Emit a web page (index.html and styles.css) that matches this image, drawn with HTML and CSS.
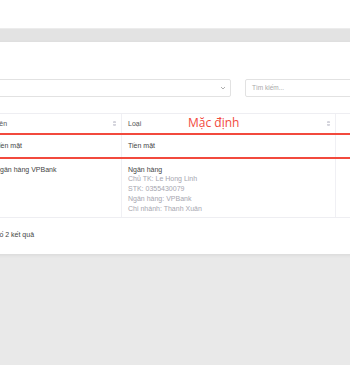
FILE: index.html
```html
<!DOCTYPE html>
<html lang="vi">
<head>
    <meta charset="UTF-8">
    <meta name="viewport" content="width=device-width, initial-scale=1.0">
    <title>Tài khoản thanh toán</title>
    <link rel="stylesheet" href="styles.css">
</head>
<body>
    <div class="topbar"></div>
    <div class="band"></div>
    <div class="page">
        <div class="card">
            <div class="filters">
                <div class="select">
                    <svg class="chevron" width="6" height="4" viewBox="0 0 6 4"><path d="M1 1 L3 3 L5 1" fill="none" stroke="#999" stroke-width="0.8"/></svg>
                </div>
                <div class="search">Tìm kiếm...</div>
            </div>
            <div class="table">
                <div class="row head">
                    <div class="cell c1">Tên <span class="sort"></span></div>
                    <div class="cell c2">Loại <span class="sort"></span></div>
                    <div class="cell c3"></div>
                </div>
                <div class="row marked">
                    <div class="cell c1">Tiền mặt</div>
                    <div class="cell c2">Tiền mặt</div>
                    <div class="cell c3"></div>
                </div>
                <div class="row">
                    <div class="cell c1">Ngân hàng VPBank</div>
                    <div class="cell c2">
                        <div>Ngân hàng</div>
                        <div class="muted">Chủ TK: Le Hong Linh</div>
                        <div class="muted">STK: 0355430079</div>
                        <div class="muted">Ngân hàng: VPBank</div>
                        <div class="muted">Chi nhánh: Thanh Xuân</div>
                    </div>
                    <div class="cell c3"></div>
                </div>
            </div>
            <div class="footer">Tổng số 2 kết quả</div>
            <div class="note">Mặc định</div>
        </div>
    </div>
</body>
</html>
```
FILE: styles.css
```css
html, body {
    margin: 0;
    padding: 0;
    height: 100%;
    overflow: hidden;
}
body {
    font-family: "Liberation Sans", Arial, sans-serif;
    font-size: 7px;
    color: #444;
    background: #e9e9e9;
}
.topbar {
    height: 28px;
    background: #fff;
}
.band {
    height: 14px;
    background: #e3e3e3;
    border-top: 1px solid #ececec;
    box-sizing: border-box;
}
.page {
    background: #e9e9e9;
}
.card {
    position: relative;
    background: #fff;
    margin-left: -11px;
    width: 400px;
    padding-top: 37px;
    box-shadow: 0 1px 4px rgba(0, 0, 0, 0.08);
}
.filters {
    display: flex;
    gap: 14px;
    margin-left: -20px;
    margin-bottom: 16px;
}
.select {
    width: 262px;
    height: 18px;
    box-sizing: border-box;
    border: 1px solid #e2e2e2;
    border-radius: 2px;
    display: flex;
    align-items: center;
    justify-content: flex-end;
    padding-right: 4px;
}
.search {
    flex: 1;
    height: 18px;
    box-sizing: border-box;
    border: 1px solid #e2e2e2;
    border-radius: 2px;
    padding-left: 6px;
    line-height: 16px;
    color: #aaa;
    font-size: 6.5px;
}
.table {
    border-top: 1px solid #eeeef2;
}
.row {
    display: grid;
    grid-template-columns: 133px 214px 1fr;
    border-bottom: 1px solid #eeeef2;
    line-height: 9.7px;
}
.cell {
    padding: 0 6px;
    position: relative;
}
.c1, .c2 {
    border-right: 1px solid #f0f0f4;
}
.head {
    height: 19px;
    align-items: center;
    color: #555;
    border-bottom: 2px solid #f24a3d;
}
.head .cell {
    height: 19px;
    line-height: 19px;
}
.sort {
    position: absolute;
    right: 5px;
    top: 7px;
    width: 3px;
    height: 5px;
    background:
        linear-gradient(to bottom, #d4d4dc 0 2px, transparent 2px 3px, #d4d4dc 3px 5px);
    border-radius: 1px;
}
.marked {
    border-bottom: 2px solid #f24a3d;
}
.marked .cell {
    padding-top: 6px;
    padding-bottom: 6px;
}
.row:last-child .cell {
    padding-top: 6px;
    padding-bottom: 4px;
}
.muted {
    color: #a6a6b0;
}
.footer {
    padding: 12px 0 14px 0;
    margin-left: -11px;
    line-height: 10px;
    color: #444;
}
.note {
    position: absolute;
    left: 199px;
    top: 72px;
    font-size: 12px;
    color: #f24a3d;
    font-family: "Open Sans", "Liberation Sans", sans-serif;
}
```
